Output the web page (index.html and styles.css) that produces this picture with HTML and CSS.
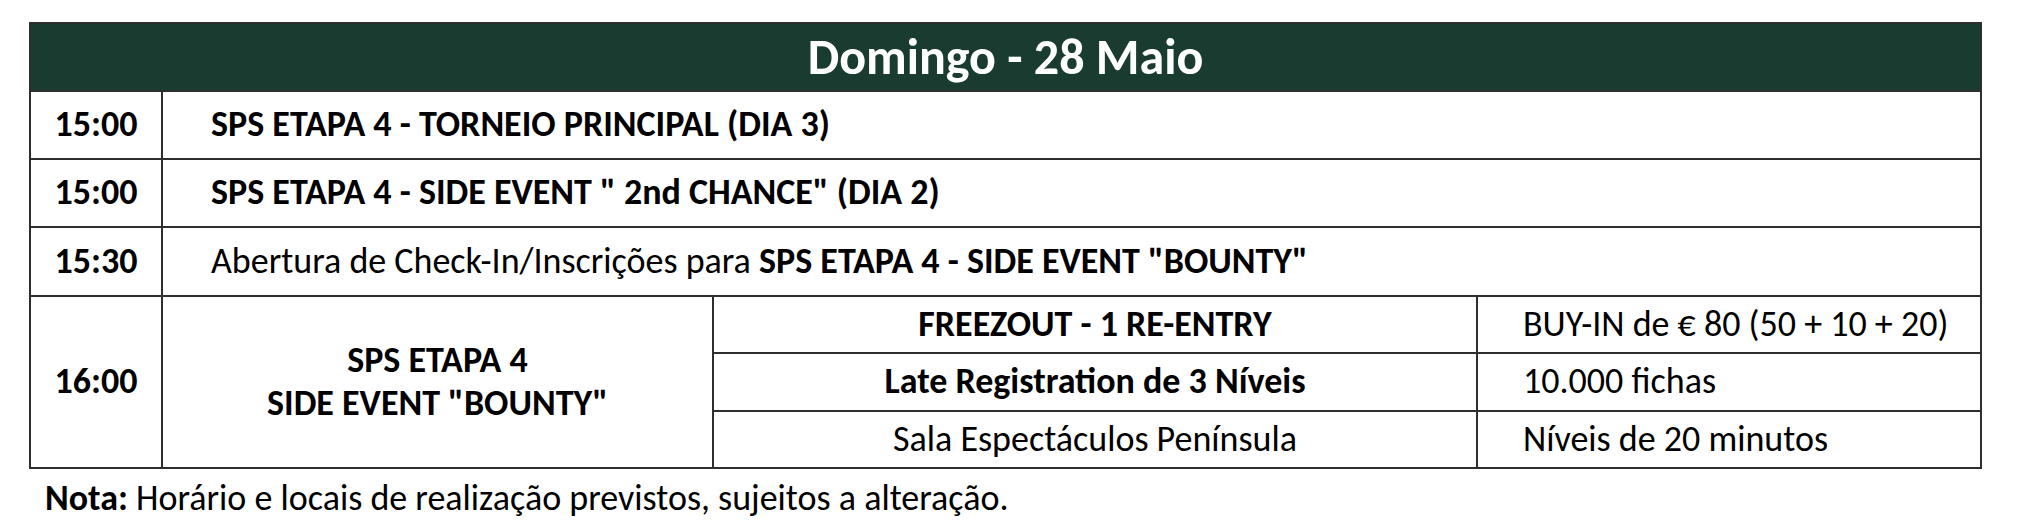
FILE: index.html
```html
<!DOCTYPE html>
<html lang="pt">
<head>
<meta charset="utf-8">
<title>Domingo - 28 Maio</title>
<link rel="stylesheet" href="styles.css">
</head>
<body>
<div class="page">
  <table class="schedule">
    <colgroup>
      <col class="c-time">
      <col class="c-event">
      <col class="c-info">
      <col class="c-detail">
    </colgroup>
    <tr class="r-head">
      <th colspan="4" class="head">Domingo - 28 Maio</th>
    </tr>
    <tr class="r-a">
      <td class="time">15:00</td>
      <td colspan="3" class="desc"><b>SPS ETAPA 4 - TORNEIO PRINCIPAL (DIA 3)</b></td>
    </tr>
    <tr class="r-b">
      <td class="time">15:00</td>
      <td colspan="3" class="desc"><b>SPS ETAPA 4 - SIDE EVENT " 2nd CHANCE" (DIA 2)</b></td>
    </tr>
    <tr class="r-c">
      <td class="time">15:30</td>
      <td colspan="3" class="desc">Abertura de Check-In/Inscrições para <b>SPS ETAPA 4 - SIDE EVENT "BOUNTY"</b></td>
    </tr>
    <tr class="r-sub1">
      <td rowspan="3" class="time">16:00</td>
      <td rowspan="3" class="event"><b>SPS ETAPA 4<br>SIDE EVENT "BOUNTY"</b></td>
      <td class="info"><b>FREEZOUT - 1 RE-ENTRY</b></td>
      <td class="detail">BUY-IN de € 80 (50 + 10 + 20)</td>
    </tr>
    <tr class="r-sub2">
      <td class="info"><b>Late Registration de 3 Níveis</b></td>
      <td class="detail">10.000 fichas</td>
    </tr>
    <tr class="r-sub3">
      <td class="info">Sala Espectáculos Península</td>
      <td class="detail">Níveis de 20 minutos</td>
    </tr>
  </table>
  <p class="note"><b>Nota:</b> Horário e locais de realização previstos, sujeitos a alteração.</p>
</div>
</body>
</html>
```

FILE: styles.css
```css
html, body {
  margin: 0;
  padding: 0;
  background: #ffffff;
}

body {
  font-family: Carlito, Calibri, Lato, "Liberation Sans", sans-serif;
  color: #000000;
}

.page {
  padding: 22px 0 0 29px;
}

.schedule {
  border-collapse: collapse;
  table-layout: fixed;
  width: 1951px;
  font-size: 36px;
}

.c-time { width: 132px; }
.c-event { width: 551px; }
.c-info { width: 764px; }
.c-detail { width: 504px; }

.schedule th,
.schedule td {
  border: 2px solid #2e2e2e;
  padding: 0;
  vertical-align: middle;
  white-space: nowrap;
  line-height: 1.15;
}

.head {
  background: #1a3c30;
  color: #ffffff;
  font-size: 50px;
  font-weight: 700;
  text-align: center;
  height: 66px;
}

.r-a td, .r-b td { height: 66px; }
.r-c td { height: 67px; }
.r-sub1 td { height: 55px; }
.r-sub2 td { height: 56px; }
.r-sub3 td { height: 55px; }

.time {
  font-weight: 700;
  text-align: center;
}

.desc {
  padding-left: 48px !important;
  text-align: left;
}

.schedule .event {
  text-align: center;
  line-height: 43px;
}

.info {
  text-align: center;
}

.detail {
  padding-left: 45px !important;
  text-align: left;
}

.note {
  margin: 8px 0 0 16px;
  font-size: 36px;
  line-height: 43px;
}
```
